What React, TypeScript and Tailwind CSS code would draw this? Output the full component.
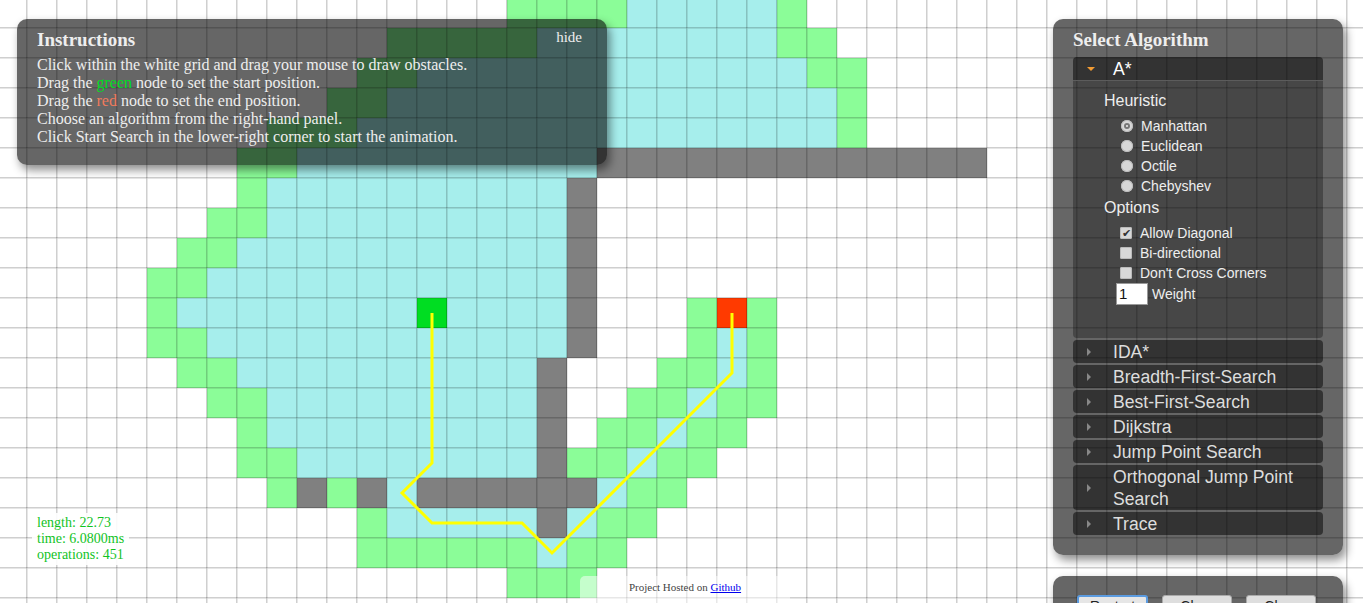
type Cell = "." | "o" | "c" | "#" | "S" | "E";

const COLS = 46;
const ROWS = 21;

// [row, fromCol, toCol, state]
const runs: [number, number, number, Cell][] = [
  [0, 17, 20, "o"], [0, 21, 25, "c"], [0, 26, 26, "o"],
  [1, 13, 17, "o"], [1, 18, 25, "c"], [1, 26, 27, "o"],
  [2, 12, 13, "o"], [2, 14, 26, "c"], [2, 27, 28, "o"],
  [3, 11, 12, "o"], [3, 13, 27, "c"], [3, 28, 28, "o"],
  [4, 9, 11, "o"], [4, 12, 27, "c"], [4, 28, 28, "o"],
  [5, 8, 9, "o"], [5, 10, 19, "c"], [5, 20, 32, "#"],
  [6, 8, 8, "o"], [6, 9, 18, "c"], [6, 19, 19, "#"],
  [7, 7, 8, "o"], [7, 9, 18, "c"], [7, 19, 19, "#"],
  [8, 6, 7, "o"], [8, 8, 18, "c"], [8, 19, 19, "#"],
  [9, 5, 6, "o"], [9, 7, 18, "c"], [9, 19, 19, "#"],
  [10, 5, 5, "o"], [10, 6, 13, "c"], [10, 14, 14, "S"], [10, 15, 18, "c"], [10, 19, 19, "#"],
  [10, 23, 23, "o"], [10, 24, 24, "E"], [10, 25, 25, "o"],
  [11, 5, 6, "o"], [11, 7, 18, "c"], [11, 19, 19, "#"], [11, 23, 23, "o"], [11, 24, 24, "c"], [11, 25, 25, "o"],
  [12, 6, 7, "o"], [12, 8, 17, "c"], [12, 18, 18, "#"], [12, 22, 23, "o"], [12, 24, 24, "c"], [12, 25, 25, "o"],
  [13, 7, 8, "o"], [13, 9, 17, "c"], [13, 18, 18, "#"], [13, 21, 22, "o"], [13, 23, 23, "c"], [13, 24, 25, "o"],
  [14, 8, 8, "o"], [14, 9, 17, "c"], [14, 18, 18, "#"], [14, 20, 21, "o"], [14, 22, 22, "c"], [14, 23, 24, "o"],
  [15, 8, 9, "o"], [15, 10, 17, "c"], [15, 18, 18, "#"], [15, 19, 20, "o"], [15, 21, 21, "c"], [15, 22, 23, "o"],
  [16, 9, 9, "o"], [16, 10, 10, "#"], [16, 11, 11, "o"], [16, 12, 12, "#"], [16, 13, 13, "c"], [16, 14, 19, "#"],
  [16, 20, 20, "c"], [16, 21, 22, "o"],
  [17, 12, 12, "o"], [17, 13, 17, "c"], [17, 18, 18, "#"], [17, 19, 19, "c"], [17, 20, 21, "o"],
  [18, 12, 17, "o"], [18, 18, 18, "c"], [18, 19, 20, "o"],
  [19, 17, 19, "o"],
];

const grid: Cell[][] = Array.from({ length: ROWS }, () => Array<Cell>(COLS).fill("."));
for (const [r, a, b, s] of runs) for (let c = a; c <= b; c++) grid[r][c] = s;

const fills: Record<Cell, string> = {
  ".": "#ffffff",
  o: "#8bfd98",
  c: "#a6eeec",
  "#": "#808080",
  S: "#00dd22",
  E: "#ff3a00",
};

const cx = (c: number) => 30 * c + 12;
const cy = (r: number) => 30 * r + 13;
const path = [
  [14, 10], [14, 15], [13, 16], [14, 17], [17, 17], [18, 18], [24, 12], [24, 10],
]
  .map(([c, r]) => `${cx(c)},${cy(r)}`)
  .join(" ");

const Board = () => (
  <svg width={1363} height={603} className="block">
    {grid.map((row, r) =>
      row.map((s, c) => (
        <rect
          key={`${r}-${c}`}
          x={-3 + 30 * c}
          y={-2 + 30 * r}
          width={30}
          height={30}
          fill={fills[s]}
          stroke="#000"
          strokeOpacity={0.2}
        />
      ))
    )}
    <polyline points={path} fill="none" stroke="#ffff00" strokeWidth={3} />
  </svg>
);

const Radio = ({ checked }: { checked?: boolean }) => (
  <span className="flex h-[12px] w-[12px] items-center justify-center rounded-full bg-[#d8d8d8] shadow-[inset_0_0_0_1px_#bbb]">
    {checked && <span className="h-[6px] w-[6px] rounded-full border-[2px] border-[#777] bg-[#eee]" />}
  </span>
);

const Check = ({ checked }: { checked?: boolean }) => (
  <span className="flex h-[12px] w-[12px] items-center justify-center rounded-[2px] bg-[#d8d8d8] text-[11px] leading-none text-[#333] shadow-[inset_0_0_0_1px_#bbb]">
    {checked ? "✔" : ""}
  </span>
);

const Header = ({ label }: { label: string }) => (
  <div className="flex items-center rounded-[4px] bg-black/50 pl-[14px] pr-2 pt-[1px] text-[17.6px] leading-[22px] text-[#ddd]">
    <span className="w-[26px] shrink-0">
      <span className="block h-0 w-0 border-y-[4px] border-l-[4px] border-y-transparent border-l-[#888]" />
    </span>
    <span>{label}</span>
  </div>
);

export default function App() {
  return (
    <div className="relative h-[603px] w-[1363px] overflow-hidden bg-white font-['Liberation_Serif',serif]">
      <Board />

      {/* instructions */}
      <div className="absolute left-[17px] top-[19px] w-[590px] rounded-[10px] bg-black/60 px-5 pb-[19px] pt-[9px] text-[#eee] shadow-[3px_5px_10px_rgba(0,0,0,0.45)]">
        <h3 className="text-[19px] font-bold leading-6">Instructions</h3>
        <span className="absolute right-[25px] top-[10px] text-[15px] leading-[17px]">hide</span>
        <div className="mt-[4px] text-[16px] leading-[18px]">
          Click within the white grid and drag your mouse to draw obstacles.
          <br />
          Drag the <span className="text-[#00dd22]">green</span> node to set the start position.
          <br />
          Drag the <span className="text-[#f07a5c]">red</span> node to set the end position.
          <br />
          Choose an algorithm from the right-hand panel.
          <br />
          Click Start Search in the lower-right corner to start the animation.
        </div>
      </div>

      {/* algorithm panel */}
      <div className="absolute left-[1053px] top-[19px] h-[536px] w-[290px] rounded-[10px] bg-black/60 px-5 pt-[9px] text-[#eee] shadow-[3px_5px_10px_rgba(0,0,0,0.45)]">
        <h3 className="text-[19px] font-bold leading-6">Select Algorithm</h3>
        <div className="mt-[5px] flex flex-col gap-[2px] font-['Liberation_Sans',Arial,sans-serif]">
          <div>
            <div className="flex h-[23px] items-center rounded-t-[4px] bg-black/50 pl-[14px] pt-[1px] text-[17.6px] leading-[22px] text-white">
              <span className="w-[26px] shrink-0">
                <span className="block h-0 w-0 border-x-[4px] border-t-[4px] border-x-transparent border-t-[#f39c33]" />
              </span>
              <span>A*</span>
            </div>
            <div className="h-[258px] rounded-b-[4px] border-t border-[#5c5c5c] bg-black/30 pl-[31px] pt-[11px] text-[#eee]">
              <div className="text-[16px] leading-[18px]">Heuristic</div>
              <div className="mt-[6px] flex flex-col pl-[17px] text-[14px]">
                {["Manhattan", "Euclidean", "Octile", "Chebyshev"].map((h, i) => (
                  <label key={h} className="flex h-[20px] items-center gap-[8px]">
                    <Radio checked={i === 0} />
                    <span>{h}</span>
                  </label>
                ))}
              </div>
              <div className="mt-[3px] text-[16px] leading-[18px]">Options</div>
              <div className="mt-[6px] flex flex-col pl-[16px] text-[14px]">
                {["Allow Diagonal", "Bi-directional", "Don't Cross Corners"].map((o, i) => (
                  <label key={o} className="flex h-[20px] items-center gap-[8px]">
                    <Check checked={i === 0} />
                    <span>{o}</span>
                  </label>
                ))}
              </div>
              <div className="flex h-[22px] items-center gap-[4px] pl-[12px] text-[14px]">
                <span className="flex h-[22px] w-[32px] items-center border border-[#999] bg-white pl-[2px] text-[15px] text-[#111]">
                  1
                </span>
                <span>Weight</span>
              </div>
            </div>
          </div>
          {[
            "IDA*",
            "Breadth-First-Search",
            "Best-First-Search",
            "Dijkstra",
            "Jump Point Search",
            "Orthogonal Jump Point Search",
            "Trace",
          ].map((a) => (
            <Header key={a} label={a} />
          ))}
        </div>
      </div>

      {/* play panel */}
      <div className="absolute left-[1053px] top-[576px] h-[70px] w-[290px] rounded-[10px] bg-black/60 pl-[24px] pt-[19px] shadow-[3px_5px_10px_rgba(0,0,0,0.45)]">
        <div className="flex items-start gap-[14px] font-['Liberation_Sans',Arial,sans-serif] text-[14px] leading-[15px] text-[#222]">
          <button className="w-[71px] rounded-[3px] border-2 border-[#5b9be0] bg-[#e6e6e6] px-[6px] pb-[4px] pt-[2px]">
            Restart Search
          </button>
          <button className="w-[70px] rounded-[3px] border border-[#aaa] bg-[#dedede] px-[8px] pb-[4px] pt-[3px]">
            Clear Path
          </button>
          <button className="w-[70px] rounded-[3px] border border-[#aaa] bg-[#dedede] px-[8px] pb-[4px] pt-[3px]">
            Clear Walls
          </button>
        </div>
      </div>

      {/* stats */}
      <div className="absolute left-[32px] top-[513px] bg-white/90 px-[5px] py-[2px] text-[14px] leading-[16px] text-[#11c31f]">
        <div>length: 22.73</div>
        <div>time: 6.0800ms</div>
        <div>operations: 451</div>
      </div>

      {/* footer */}
      <div className="absolute left-[580px] top-[576px] h-[34px] w-[210px] rounded-[5px] bg-white/50 pt-[5px] text-center text-[11px] leading-[13px] text-[#444]">
        Project Hosted on{" "}
        <a href="#" className="text-[#00e] underline">
          Github
        </a>
      </div>
    </div>
  );
}
